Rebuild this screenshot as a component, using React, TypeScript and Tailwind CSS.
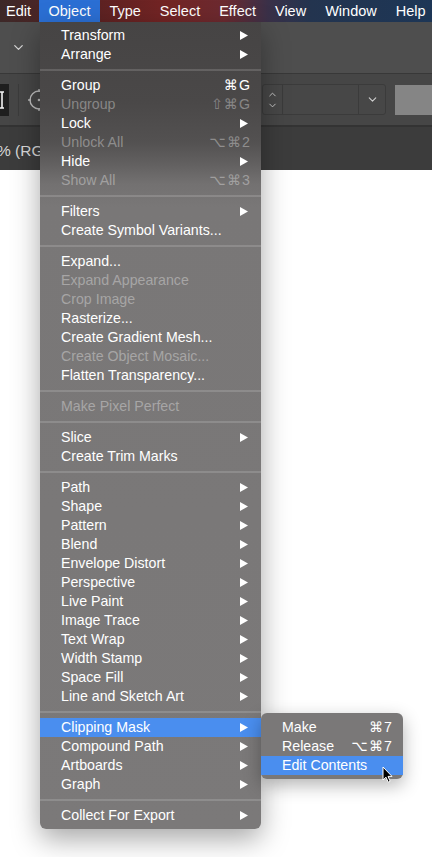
import { ChevronDown, ChevronUp } from "lucide-react";

type Item = {
  label: string;
  key?: string;
  sub?: boolean;
  off?: boolean;
  active?: boolean;
};

const sections: Item[][] = [
  [
    { label: "Transform", sub: true },
    { label: "Arrange", sub: true },
  ],
  [
    { label: "Group", key: "⌘G" },
    { label: "Ungroup", key: "⇧⌘G", off: true },
    { label: "Lock", sub: true },
    { label: "Unlock All", key: "⌥⌘2", off: true },
    { label: "Hide", sub: true },
    { label: "Show All", key: "⌥⌘3", off: true },
  ],
  [
    { label: "Filters", sub: true },
    { label: "Create Symbol Variants..." },
  ],
  [
    { label: "Expand..." },
    { label: "Expand Appearance", off: true },
    { label: "Crop Image", off: true },
    { label: "Rasterize..." },
    { label: "Create Gradient Mesh..." },
    { label: "Create Object Mosaic...", off: true },
    { label: "Flatten Transparency..." },
  ],
  [{ label: "Make Pixel Perfect", off: true }],
  [
    { label: "Slice", sub: true },
    { label: "Create Trim Marks" },
  ],
  [
    "Path",
    "Shape",
    "Pattern",
    "Blend",
    "Envelope Distort",
    "Perspective",
    "Live Paint",
    "Image Trace",
    "Text Wrap",
    "Width Stamp",
    "Space Fill",
    "Line and Sketch Art",
  ].map((label) => ({ label, sub: true })),
  [
    { label: "Clipping Mask", sub: true, active: true },
    { label: "Compound Path", sub: true },
    { label: "Artboards", sub: true },
    { label: "Graph", sub: true },
  ],
  [{ label: "Collect For Export", sub: true }],
];

const subItems: Item[] = [
  { label: "Make", key: "⌘7" },
  { label: "Release", key: "⌥⌘7" },
  { label: "Edit Contents", active: true },
];

const menubar = ["Edit", "Object", "Type", "Select", "Effect", "View", "Window", "Help"];

function Arrow() {
  return (
    <svg width="8" height="9" viewBox="0 0 8 9" className="shrink-0">
      <polygon points="0,0 8,4.5 0,9" fill="#ffffff" />
    </svg>
  );
}

function Row({ item }: { item: Item }) {
  return (
    <div
      className={`flex h-[19px] items-center justify-between pl-[21px] ${
        item.sub ? "pr-[13px]" : "pr-[10px]"
      } ${item.active ? "bg-[#4a8eef]" : ""} ${item.off ? "text-white/35" : "text-white"}`}
    >
      <span className="whitespace-nowrap">{item.label}</span>
      {item.key && <span className="tracking-[1px]">{item.key}</span>}
      {item.sub && <Arrow />}
    </div>
  );
}

function Target() {
  return (
    <svg width="24" height="24" viewBox="0 0 24 24" fill="none" stroke="#bdbdbd" strokeWidth="1.4">
      <circle cx="12" cy="12" r="9" />
      <line x1="12" y1="1" x2="12" y2="4" />
      <line x1="12" y1="20" x2="12" y2="23" />
      <line x1="1" y1="12" x2="4" y2="12" />
      <line x1="20" y1="12" x2="23" y2="12" />
      <circle cx="12" cy="12" r="1.3" fill="#bdbdbd" stroke="none" />
    </svg>
  );
}

export default function App() {
  return (
    <div className="relative flex h-[857px] w-[432px] flex-col overflow-hidden bg-white font-['Liberation_Sans','DejaVu_Sans',sans-serif]">
      {/* system menu bar */}
      <div className="flex h-[22px] shrink-0 bg-[linear-gradient(to_right,#3d2828_0%,#5c2222_22%,#732424_38%,#6c2a30_52%,#3a3048_62%,#23344f_72%,#1d3656_100%)] text-[14.5px] leading-[22px] text-white">
        {menubar.map((m, i) => (
          <div
            key={m}
            className={`${i === 0 ? "pl-[6px] pr-[8px]" : "px-[9.5px]"} ${
              m === "Object" ? "bg-[#2b6fd4]" : ""
            }`}
          >
            {m}
          </div>
        ))}
      </div>

      {/* control bar */}
      <div className="flex h-[51px] shrink-0 items-center bg-[#4e4e4e] pl-[11px] text-[#d6d6d6]">
        <ChevronDown size={15} strokeWidth={2} />
      </div>
      <div className="h-px shrink-0 bg-[#383838]" />
      <div className="flex h-[51px] shrink-0 items-center bg-[#464646]">
        <div className="flex h-[32px] w-[9px] items-center bg-[#1e1e1e]">
          <svg width="4" height="18" viewBox="0 0 4 18">
            <path d="M0 1h4M2 1v16M0 17h4" stroke="#f2f2f2" strokeWidth="1.6" fill="none" />
          </svg>
        </div>
        <div className="ml-[9px] flex h-[32px] items-center border-l border-[#3c3c3c] pl-[8px]">
          <Target />
        </div>
        <div className="ml-auto flex items-center gap-[9px]">
          <div className="flex h-[31px] items-stretch rounded-[3px] border border-[#3b3b3b] bg-[#474747]">
            <div className="flex w-[19px] flex-col items-center justify-center text-[#d0d0d0]">
              <ChevronUp size={11} strokeWidth={2} />
              <ChevronDown size={11} strokeWidth={2} />
            </div>
            <div className="w-[77px] border-x border-[#3b3b3b]" />
            <div className="flex w-[26px] items-center justify-center text-[#d0d0d0]">
              <ChevronDown size={13} strokeWidth={2} />
            </div>
          </div>
          <div className="h-[30px] w-[37px] bg-[#858585]" />
        </div>
      </div>
      <div className="h-[2px] shrink-0 bg-[#333333]" />
      <div className="flex h-[43px] w-[40px] shrink-0 items-center overflow-hidden bg-[#3c3c3c] pt-[4px] text-[15.5px] text-[#d8d8d8]">
        <span className="-ml-[3px] whitespace-nowrap">% (RG</span>
      </div>
      <div className="-mt-[43px] ml-[40px] h-[43px] shrink-0 bg-[#3c3c3c]" />
      <div className="flex-1 bg-white" />

      {/* Object menu */}
      <div className="absolute left-[40px] top-[22px] w-[221px] rounded-b-[6px] bg-[linear-gradient(to_bottom,#464444_0px,#4a4848_80px,#535151_120px,#626060_142px,#737171_162px,#797777_185px,#7b7979_100%)] py-[4px] text-[14.2px] leading-[19px] shadow-[0_10px_28px_rgba(0,0,0,0.35)]">
        {sections.map((sec, i) => (
          <div key={i}>
            {i > 0 && (
              <div className="flex h-[12px] items-center">
                <div className="h-[2px] w-full bg-white/15" />
              </div>
            )}
            {sec.map((it) => (
              <Row key={it.label} item={it} />
            ))}
          </div>
        ))}
      </div>

      {/* Clipping Mask submenu */}
      <div className="absolute left-[261px] top-[713px] w-[142px] rounded-[6px] bg-[#7a7878] py-[4.5px] text-[14.2px] leading-[19px] shadow-[0_6px_18px_rgba(0,0,0,0.3)]">
        {subItems.map((it) => (
          <Row key={it.label} item={it} />
        ))}
      </div>

      {/* mouse pointer */}
      <svg
        className="absolute left-[382px] top-[766px]"
        width="12"
        height="18"
        viewBox="0 0 12 18"
      >
        <path
          d="M1 1 L1 14 L4 11.2 L6.2 16.2 L8.2 15.3 L6 10.4 L10 10.4 Z"
          fill="#000000"
          stroke="#ffffff"
          strokeWidth="1"
          strokeLinejoin="round"
        />
      </svg>
    </div>
  );
}
